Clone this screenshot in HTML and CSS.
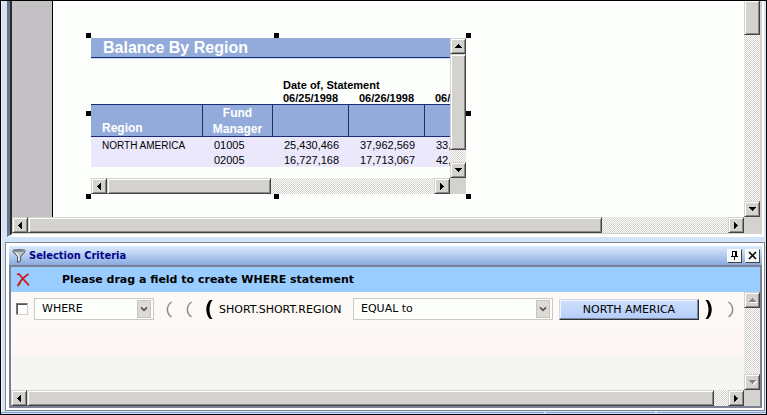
FILE: index.html
```
<!DOCTYPE html>
<html lang="en">
<head>
  <meta charset="UTF-8" />
  <meta name="viewport" content="width=device-width, initial-scale=1.0" />
  <title>Selection Criteria</title>
  <link rel="stylesheet" href="styles.css">
</head>
<body>
  <main class="canvas">
    <div class="canvas-view">
      <div class="page">
        <section class="report">
          <div class="report-view">
            <h1 class="report-title">Balance By Region</h1>
            <table class="report-table">
              <colgroup>
                <col class="col-region">
                <col class="col-manager">
                <col class="col-date">
                <col class="col-date">
                <col class="col-date">
              </colgroup>
              <thead>
                <tr class="group-row">
                  <td></td>
                  <td></td>
                  <th colspan="3">Date of, Statement</th>
                </tr>
                <tr class="date-row">
                  <td></td>
                  <td></td>
                  <th>06/25/1998</th>
                  <th>06/26/1998</th>
                  <th>06/27/1998</th>
                </tr>
                <tr class="head-row">
                  <th><div class="clip">Region</div></th>
                  <th class="center"><div class="clip">Fund<br>Manager</div></th>
                  <td></td>
                  <td></td>
                  <td></td>
                </tr>
              </thead>
              <tbody>
                <tr>
                  <td class="name">NORTH AMERICA</td>
                  <td>01005</td>
                  <td>25,430,466</td>
                  <td>37,962,569</td>
                  <td>33,194,207</td>
                </tr>
                <tr>
                  <td></td>
                  <td>02005</td>
                  <td>16,727,168</td>
                  <td>17,713,067</td>
                  <td>42,305,118</td>
                </tr>
              </tbody>
            </table>
          </div>
          <div class="scroll scroll-y">
            <button class="scroll-btn" aria-label="Scroll up"><svg viewBox="0 0 7 4" width="7" height="4"><path d="M3 0h1v1h1v1h1v1h1v1H0V3h1V2h1V1h1z"/></svg></button>
            <div class="track"><div class="thumb thumb-report-y"></div></div>
            <button class="scroll-btn" aria-label="Scroll down"><svg viewBox="0 0 7 4" width="7" height="4"><path d="M0 0h7v1H6v1H5v1H4v1H3V3H2V2H1V1H0z"/></svg></button>
          </div>
          <div class="scroll scroll-x">
            <button class="scroll-btn" aria-label="Scroll left"><svg viewBox="0 0 4 7" width="4" height="7"><path d="M4 0v7H3V6H2V5H1V4H0V3h1V2h1V1h1V0z"/></svg></button>
            <div class="track"><div class="thumb thumb-report-x"></div></div>
            <button class="scroll-btn" aria-label="Scroll right"><svg viewBox="0 0 4 7" width="4" height="7"><path d="M0 0v7h1V6h1V5h1V4h1V3H3V2H2V1H1V0z"/></svg></button>
          </div>
          <div class="corner"></div>

          <!-- resize handles -->
          <span class="handle top left"></span>
          <span class="handle top mid"></span>
          <span class="handle top right"></span>
          <span class="handle half left"></span>
          <span class="handle half right"></span>
          <span class="handle bottom left"></span>
          <span class="handle bottom mid"></span>
          <span class="handle bottom right"></span>
        </section>
      </div>
    </div>
    <div class="scroll scroll-y">
      <div class="track"><div class="thumb thumb-canvas-y"></div></div>
      <button class="scroll-btn" aria-label="Scroll down"><svg viewBox="0 0 7 4" width="7" height="4"><path d="M0 0h7v1H6v1H5v1H4v1H3V3H2V2H1V1H0z"/></svg></button>
    </div>
    <div class="scroll scroll-x">
      <button class="scroll-btn" aria-label="Scroll left"><svg viewBox="0 0 4 7" width="4" height="7"><path d="M4 0v7H3V6H2V5H1V4H0V3h1V2h1V1h1V0z"/></svg></button>
      <div class="track"><div class="thumb thumb-canvas-x"></div></div>
      <button class="scroll-btn" aria-label="Scroll right"><svg viewBox="0 0 4 7" width="4" height="7"><path d="M0 0v7h1V6h1V5h1V4h1V3H3V2H2V1H1V0z"/></svg></button>
    </div>
    <div class="corner"></div>
  </main>

  <section class="panel">
    <header class="panel-head">
      <svg class="funnel" viewBox="0 0 14 14" width="14" height="14">
        <path d="M1 1.5C1 .5 13 .5 13 1.5v1.200L8.700 7.500V12L5.500 13.500v-6L1 2.700z" fill="#b9c4c6" stroke="#4c5355"/>
        <path d="M2.500 2h9" stroke="#56605f"/>
        <path d="M4 4l2.800 3.200V12" fill="none" stroke="#fff"/>
      </svg>
      <h2 class="panel-title">Selection Criteria</h2>
      <button class="tool" aria-label="Pin"><svg viewBox="0 0 9 9" width="9" height="9"><path d="M2 0h5v5h1v1H5v3H4V6H1V5h1zM3 1v4h2V1z" fill-rule="evenodd"/></svg></button>
      <button class="tool" aria-label="Close"><svg viewBox="0 0 9 9" width="9" height="9"><path d="M1 1l7 7M8 1L1 8" stroke="#000" stroke-width="1.500"/></svg></button>
    </header>

    <div class="panel-body">
      <div class="hint">
        <button class="delete" aria-label="Delete"><svg viewBox="0 0 14 14" width="14" height="14"><path d="M1 1.500L3 1c3 4 6 7 10 11.500M12.500 1C8 4 4 8 2 12.500" fill="none" stroke="#cf1519" stroke-width="1.700"/><path d="M4.500 9L1.500 13" stroke="#b63d22" stroke-width="2.200"/></svg></button>
        <p>Please drag a field to create WHERE statement</p>
      </div>

      <div class="criteria">
        <form class="row">
          <input type="checkbox" class="pick" aria-label="Select condition">
          <span class="combo combo-clause">
            <select aria-label="Clause"><option>WHERE</option></select>
            <svg viewBox="0 0 14 18" width="14" height="18"><path d="M3.500 7l3.500 3.500L10.500 7" /></svg>
          </span>
          <span class="parens">
            <button type="button" class="paren" aria-label="Open parenthesis 1"><svg viewBox="0 0 8 20" width="8" height="20"><path d="M6.500 3C1 7 1 14 6.500 18"/></svg></button>
            <button type="button" class="paren" aria-label="Open parenthesis 2"><svg viewBox="0 0 8 20" width="8" height="20"><path d="M6.500 3C1 7 1 14 6.500 18"/></svg></button>
            <button type="button" class="paren on" aria-label="Open parenthesis 3"><svg viewBox="0 0 8 20" width="8" height="20"><path d="M7.500 1H5C0 6 0 15 5 20H7.500C3.500 15 3.500 6 7.500 1z"/></svg></button>
          </span>
          <span class="field">SHORT.SHORT.REGION</span>
          <span class="combo combo-op">
            <select aria-label="Operator"><option>EQUAL to</option></select>
            <svg viewBox="0 0 14 18" width="14" height="18"><path d="M3.500 7l3.500 3.500L10.500 7" /></svg>
          </span>
          <button type="button" class="value">NORTH AMERICA</button>
          <span class="parens parens-close">
            <button type="button" class="paren on" aria-label="Close parenthesis 1"><svg viewBox="0 0 8 20" width="8" height="20"><path d="M.500 1H3C8 6 8 15 3 20H.500C4.500 15 4.500 6 .500 1z"/></svg></button>
            <button type="button" class="paren" aria-label="Close parenthesis 2"><svg viewBox="0 0 8 20" width="8" height="20"><path d="M1.500 3C7 7 7 14 1.500 18"/></svg></button>
          </span>
        </form>
      </div>
      <div class="scroll scroll-y">
        <button class="scroll-btn" aria-label="Scroll up" disabled><svg viewBox="0 0 7 4" width="7" height="4"><path d="M3 0h1v1h1v1h1v1h1v1H0V3h1V2h1V1h1z"/></svg></button>
        <div class="track"></div>
        <button class="scroll-btn" aria-label="Scroll down" disabled><svg viewBox="0 0 7 4" width="7" height="4"><path d="M0 0h7v1H6v1H5v1H4v1H3V3H2V2H1V1H0z"/></svg></button>
      </div>
      <div class="scroll scroll-x">
        <button class="scroll-btn" aria-label="Scroll left"><svg viewBox="0 0 4 7" width="4" height="7"><path d="M4 0v7H3V6H2V5H1V4H0V3h1V2h1V1h1V0z"/></svg></button>
        <div class="track"><div class="thumb thumb-criteria-x"></div></div>
        <button class="scroll-btn" aria-label="Scroll right"><svg viewBox="0 0 4 7" width="4" height="7"><path d="M0 0v7h1V6h1V5h1V4h1V3H3V2H2V1H1V0z"/></svg></button>
      </div>
      <div class="corner"></div>
    </div>
  </section>

  <footer class="status">
    <span></span>
    <span></span>
    <span></span>
  </footer>
</body>
</html>
```

FILE: styles.css
```
* {
  margin: 0;
  padding: 0;
  box-sizing: border-box;
}

body {
  display: flex;
  flex-direction: column;
  min-height: 100vh;
  border: 1px solid #000;
  background: linear-gradient(90deg, #f3efee 2px, #d2e4f9 2px);
  font-family: "DejaVu Sans", Verdana, sans-serif;
  font-size: 11px;
  color: #000;
}

button {
  font: inherit;
  color: inherit;
}

svg {
  display: block;
}

/* Scrollbars */
.scroll {
  display: flex;
}

.scroll-x {
  height: 16px;
}

.scroll-y {
  flex-direction: column;
  width: 16px;
}

.scroll-btn,
.thumb {
  background: #d3d2ce;
  border: 1px solid;
  border-color: #d3d2ce #444 #444 #d3d2ce;
  box-shadow: inset 1px 1px #fff, inset -1px -1px #8a8987;
}

.scroll-btn {
  display: flex;
  flex: none;
  align-items: center;
  justify-content: center;
  width: 16px;
  height: 16px;
}

.scroll-btn:disabled svg {
  fill: #858481;
  filter: drop-shadow(1px 1px #fff);
}

.track {
  flex: 1;
  min-width: 0;
  min-height: 0;
  background: repeating-conic-gradient(#fff 0 25%, #d3d2ce 0 50%) 0 0 / 2px 2px;
}

.thumb {
  width: 100%;
  height: 100%;
}

.thumb-report-y {
  height: 89%;
}

.thumb-report-x {
  width: 50%;
}

.thumb-canvas-y {
  height: 17%;
  border-top: 0;
}

.thumb-canvas-x {
  width: 82%;
}

.thumb-criteria-x {
  width: 98%;
}

.corner {
  background: #d3d2ce;
}

/* Design canvas */
.canvas {
  flex: 1;
  display: grid;
  grid-template-columns: 1fr 16px;
  grid-template-rows: 1fr 16px;
  margin: 0 2px 0 6px;
  border-left: 5px solid #3b3c49;
  border-left-style: ridge;
  border-left-color: #6e7386;
  border-right: 2px solid #fff;
  border-bottom: 3px solid #fff;
  padding: 0 2px 1px 0;
  background: #d8d1cb;
}

.canvas-view {
  padding-left: 40px;
  background: #c3c1c4;
}

.page {
  height: 100%;
  padding: 37px 0 22px 38px;
  border-left: 1px solid #000;
  background: #fdfffc;
}

/* Report object */
.report {
  position: relative;
  display: grid;
  grid-template-columns: 1fr 16px;
  grid-template-rows: 1fr 16px;
  width: 375px;
  height: 156px;
  font-family: "Liberation Sans", Arial, sans-serif;
}

.report-view {
  overflow: hidden;
}

.report-title {
  padding-left: 12px;
  border-bottom: 1px solid #1c2c74;
  background: #93abda;
  color: #fff;
  font-size: 16px;
  line-height: 19px;
  box-shadow: 0 1px #c9dcf3;
}

.report-table {
  width: 409px;
  border-spacing: 0;
  table-layout: fixed;
  text-align: left;
}

.col-region {
  width: 111px;
}

.col-manager {
  width: 70px;
}

.col-date {
  width: 76px;
}

.report-table th,
.report-table td {
  padding-left: 11px;
  white-space: nowrap;
}

.report-table .group-row th {
  height: 34px;
  line-height: 14px;
  vertical-align: bottom;
}

.report-table .date-row th {
  height: 12px;
  line-height: 12px;
}

.report-table .head-row th,
.report-table .head-row td {
  height: 33px;
  border: 1px solid #1c2c74;
  border-width: 1px 0 1px 1px;
  background: #93abda;
  color: #fff;
  font-size: 12px;
  line-height: 16px;
  vertical-align: bottom;
}

.report-table .head-row th:first-child {
  border-left: 0;
}

.report-table .head-row .center {
  padding: 0;
  text-align: center;
}

.head-row .clip {
  max-height: 31px;
  overflow: hidden;
}

.report-table tbody td {
  height: 15px;
  padding-top: 2px;
  background: #ece8fc;
  line-height: 13px;
}

.report-table tbody .name {
  font-size: 10px;
}

.report-table tbody td + td {
  padding-left: 12px;
}

.handle {
  position: absolute;
  width: 5px;
  height: 5px;
  background: #000;
}

.top { top: -5px; }
.half { top: 73px; }
.bottom { bottom: -5px; }
.left { left: -5px; }
.mid { left: 183px; }
.right { right: -5px; }

/* Selection criteria panel */
.panel {
  margin: 5px 1px 0 4px;
  padding: 3px 2px 2px 3px;
  border: 1px solid #858690;
  background: #fff;
}

.panel-head {
  display: flex;
  align-items: center;
  gap: 3px;
  height: 19px;
  padding: 0 2px 0 3px;
  background: linear-gradient(#dcebff, #8aabe0);
}

.panel-title {
  flex: 1;
  color: #04048c;
  font-family: "DejaVu Sans Condensed", Tahoma, sans-serif;
  font-size: 11px;
}

.tool {
  display: flex;
  align-items: center;
  justify-content: center;
  width: 15px;
  height: 14px;
  border: 1px solid;
  border-color: #fff #444 #444 #fff;
  background: #f7f7f7;
}

.panel-body {
  display: grid;
  grid-template-columns: 1fr 16px;
  grid-template-rows: 25px 98px 16px;
  border: 2px solid #7c8090;
}

.hint {
  grid-column: 1 / 3;
  display: flex;
  align-items: center;
  gap: 32px;
  padding-left: 5px;
  background: #99ccff;
  font-weight: bold;
}

.delete {
  border: 0;
  background: none;
}

.criteria {
  min-width: 0;
  background: linear-gradient(#fcfaf7, #fdf6f4 64px, #f5f6f4 64px);
}

.row {
  display: flex;
  align-items: center;
  gap: 6px;
  padding: 6px 9px 0 5px;
}

.pick {
  flex: none;
  width: 12px;
  height: 12px;
  appearance: none;
  border: 1px solid;
  border-color: #777 #ccc #ccc #777;
  background: #fff;
  box-shadow: inset 1px 1px #555;
}

.combo {
  display: flex;
  align-items: center;
  height: 22px;
  border: 1px solid #cbc8c0;
  background: #fdfffc;
}

.combo-clause {
  flex: 0 0 120px;
}

.combo-op {
  flex: 0 1 200px;
  min-width: 0;
}

.combo select {
  flex: 1;
  min-width: 0;
  height: 20px;
  padding: 0 20px 2px 7px;
  margin-right: -16px;
  appearance: none;
  border: 0;
  background: none;
  font: inherit;
}

.combo svg {
  flex: none;
  margin-right: 2px;
  border: 1px solid #c9c6c0;
  background: #dedbd7;
  fill: none;
  stroke: #555;
  stroke-width: 2;
  pointer-events: none;
}

.parens {
  display: flex;
  gap: 12px;
}

.combo-clause + .parens {
  padding-left: 5px;
}

.parens-close {
  gap: 14px;
}

.paren {
  border: 0;
  background: none;
}

.paren svg {
  fill: none;
  stroke: #8c8c8c;
  stroke-width: 1.5;
}

.paren.on svg {
  fill: #000;
  stroke: none;
}

.field {
  flex: 1;
  white-space: nowrap;
}

.value {
  flex: none;
  width: 140px;
  height: 21px;
  border: 1px solid;
  border-color: #d5d9e2 #333 #333 #d5d9e2;
  background: linear-gradient(#cfdffb, #b3cdfa);
  box-shadow: inset -1px -1px #7788a8, inset 1px 1px #eef4ff;
}

/* Status bar */
.status {
  display: flex;
  gap: 2px;
  height: 2px;
  margin-top: 1px;
}

.status span {
  flex: 0 0 109px;
  border-top: 1px solid #7f9fd0;
}

.status span:first-child {
  flex: 1;
}
```
